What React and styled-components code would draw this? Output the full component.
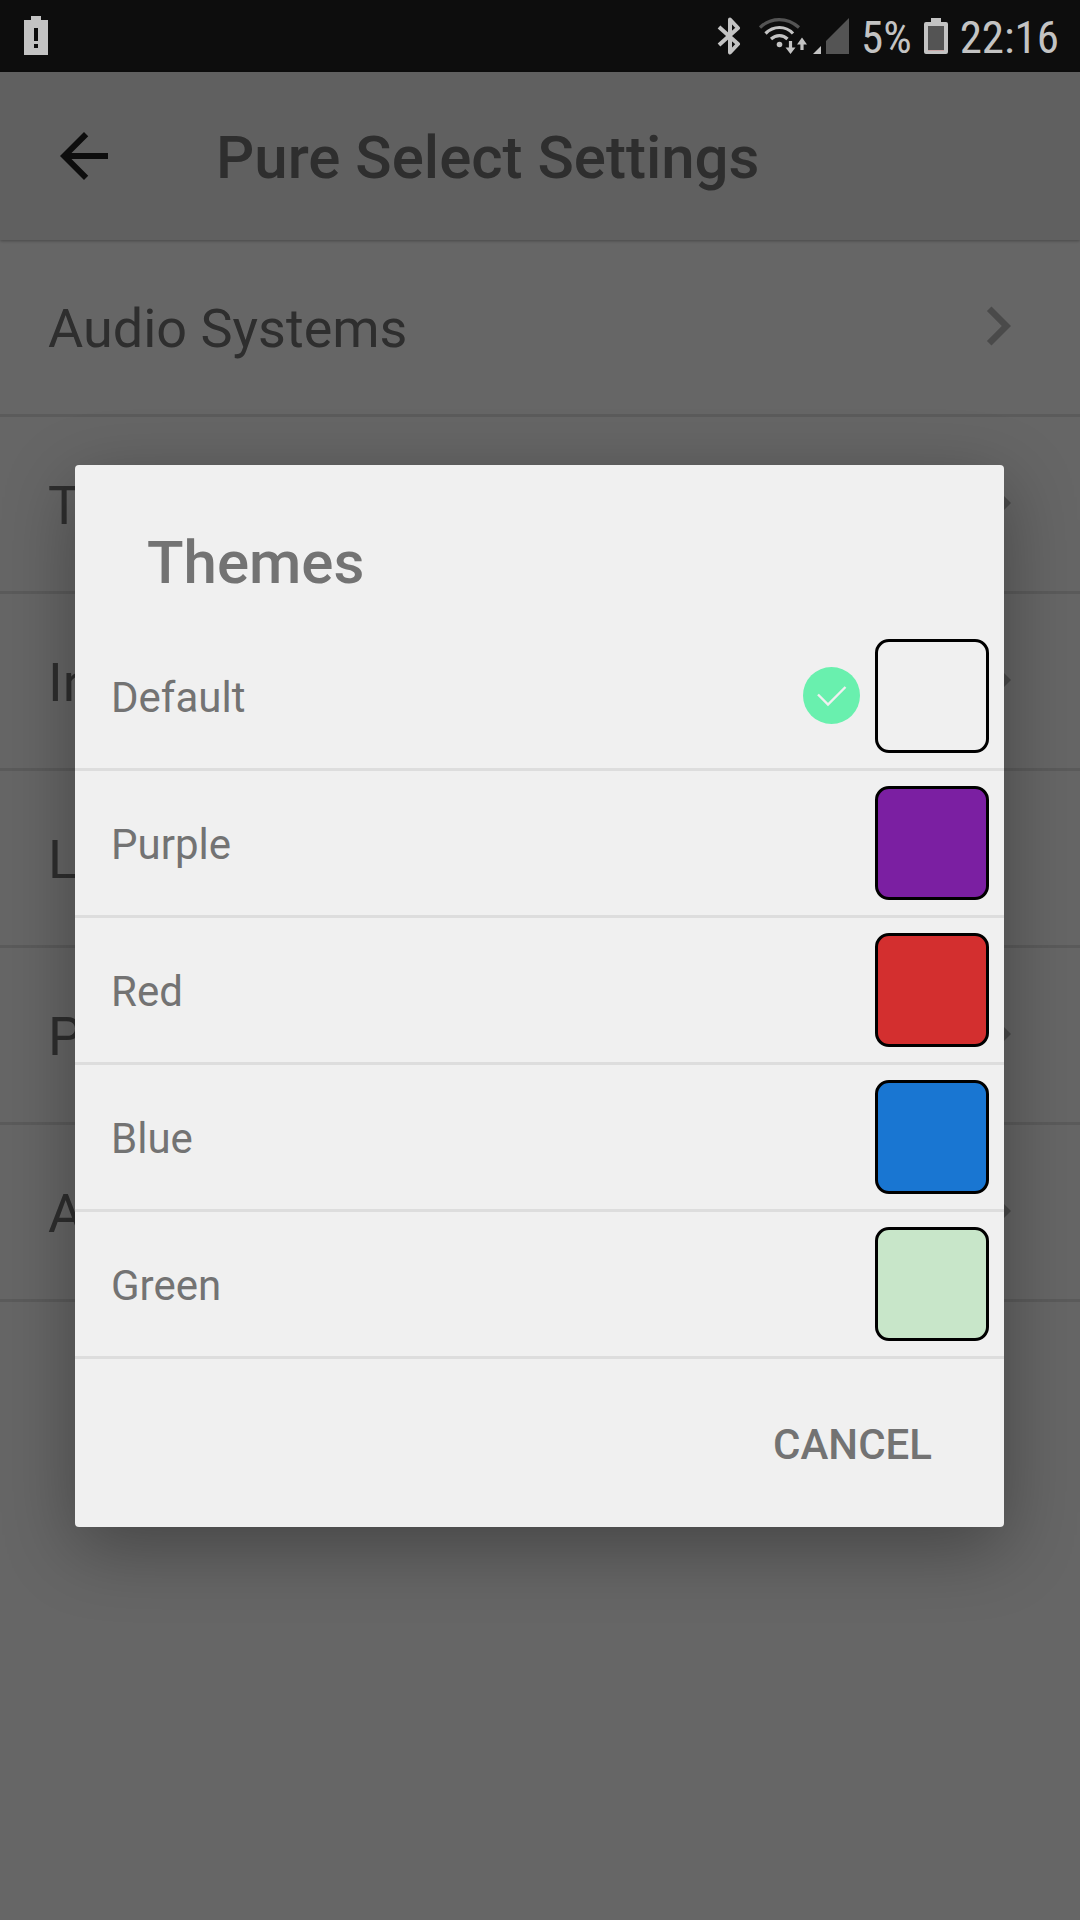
import React, { useState } from 'react';
import styled, { createGlobalStyle } from 'styled-components';

const GlobalStyle = createGlobalStyle`
  * {
    box-sizing: border-box;
  }
  body {
    margin: 0;
    background-color: #666666;
    font-family: Roboto, "Liberation Sans", sans-serif;
  }
`
const StyledScreen = styled.div`
  display: flex;
  flex-direction: column;
  min-height: 100vh;
`
const StyledStatusBar = styled.div`
  display: flex;
  align-items: center;
  justify-content: space-between;
  height: 72px;
  padding: 0 21px;
  background-color: #0d0d0d;
  color: #c3c3c3;
`
const StyledStatusGroup = styled.div`
  display: flex;
  align-items: center;
  gap: ${({ $gap }) => $gap}px;
`
const StyledStatusText = styled.span`
  padding-top: 4px;
  font-family: "Roboto Condensed", Roboto, sans-serif;
  font-size: 45px;
  line-height: 48px;
`
const StyledIcon = styled.svg`
  display: block;
  flex: none;
`
const StyledContent = styled.div`
  position: relative;
  display: flex;
  flex: 1;
  flex-direction: column;
  background-color: #ffffff;
`
const StyledHeader = styled.header`
  position: relative;
  display: flex;
  align-items: center;
  gap: 96px;
  height: 168px;
  padding: 0 48px;
  background-color: #f0f0f0;
  box-shadow: 0 1px 3px rgba(0, 0, 0, 0.3);
`
const StyledBackButton = styled.button`
  padding: 0;
  border: none;
  background: none;
  color: #212121;
`
const StyledTitle = styled.h1`
  margin: 0;
  padding-top: 4px;
  color: #737373;
  font-size: 60px;
  font-weight: 500;
  line-height: 72px;
`
const StyledSettingRow = styled.button`
  display: flex;
  align-items: center;
  justify-content: space-between;
  height: 177px;
  padding: 0 43px 0 48px;
  border: none;
  border-bottom: 3px solid #e3e3e3;
  background: none;
  color: #737373;
  font-family: inherit;
  font-size: 54px;
  line-height: 66px;
`
const StyledSettingName = styled.span`
  padding-top: 4px;
`
const StyledChevron = styled.span`
  padding-bottom: 3px;
`
const StyledScrim = styled.div`
  position: absolute;
  inset: 0;
  display: flex;
  align-items: center;
  padding: 0 76px 0 75px;
  background-color: rgba(0, 0, 0, 0.6);
`
const StyledDialog = styled.div`
  display: flex;
  flex: 1;
  flex-direction: column;
  border-radius: 4px;
  background-color: #f0f0f0;
  box-shadow: 0 20px 72px rgba(0, 0, 0, 0.33);
  color: #737373;
`
const StyledDialogTitle = styled.h2`
  margin: 0;
  padding: 62px 72px 25px;
  font-size: 60px;
  font-weight: 500;
  line-height: 72px;
`
const StyledOption = styled.label`
  display: flex;
  align-items: center;
  gap: 15px;
  height: 147px;
  padding: 0 15px 0 36px;
  border-bottom: 3px solid #dddddd;
  font-size: 42px;
  line-height: 48px;
`
const StyledOptionName = styled.span`
  flex: 1;
  padding-top: 4px;
`
const StyledRadio = styled.input`
  appearance: none;
  width: 0;
  height: 0;
  margin: 0;
`
const StyledSwatch = styled.span`
  width: 114px;
  height: 114px;
  border: 3px solid #000000;
  border-radius: 14px;
  background-color: ${({ $color }) => $color};
`
const StyledActions = styled.div`
  display: flex;
  justify-content: flex-end;
  padding: 62px 72px 58px;
`
const StyledCancelButton = styled.button`
  padding: 0;
  border: none;
  background: none;
  color: inherit;
  font-family: inherit;
  font-size: 42px;
  font-weight: 500;
  line-height: 48px;
`

const BatteryAlertIcon = () => (
    <StyledIcon width="28" height="40" viewBox="0 0 28 40">
        <path fill="#c3c3c3" fillRule="evenodd" d="M10 0h10v4h7v35H3V4h7zM13 12v13h4V12zM13 28v4h4v-4z" />
    </StyledIcon>
)

const BluetoothIcon = () => (
    <StyledIcon width="24" height="38" viewBox="0 0 24 38">
        <path
            d="M2 10l19 17-8 8.500V2.500L21 11 2 28"
            fill="none"
            stroke="#c3c3c3"
            strokeWidth="4"
            strokeLinejoin="round"
        />
    </StyledIcon>
)

const WifiIcon = () => (
    <StyledIcon width="48" height="37" viewBox="0 0 48 37">
        <g fill="none" strokeWidth="3.200">
            <path d="M1 9.500C12-1 28-1 40 9.500" stroke="#545454" />
            <path d="M6.500 15.500C14.500 7.500 26.500 7.500 34 15.500" stroke="#c3c3c3" />
            <path d="M12 21C17 16.500 24 16.500 28.500 21" stroke="#c3c3c3" />
            <path d="M31.500 23v9M43 32V23" stroke="#c3c3c3" />
        </g>
        <circle cx="20.500" cy="26.500" r="2.800" fill="#c3c3c3" />
        <path d="M26.500 29.500h10L31.500 36zM38 26.500h10L43 19.500z" fill="#c3c3c3" />
    </StyledIcon>
)

const SignalIcon = () => (
    <StyledIcon width="36" height="37" viewBox="0 0 36 37">
        <path d="M0 36l8-8v8z" fill="#c3c3c3" />
        <path d="M13 36V23L36 0v36z" fill="#545454" />
    </StyledIcon>
)

const BatteryIcon = () => (
    <StyledIcon width="24" height="36" viewBox="0 0 24 36">
        <path d="M7 0h10v4h5q2 0 2 2v28q0 2-2 2H2q-2 0-2-2V6q0-2 2-2h5z" fill="#c3c3c3" />
        <path d="M4 8h16v24H4z" fill="#545454" />
        <path d="M4 32h16v1H4z" fill="#c9a5a5" />
    </StyledIcon>
)

const BackIcon = () => (
    <StyledIcon width="72" height="72" viewBox="0 0 24 24">
        <path fill="currentColor" d="M20 11H7.830l5.590-5.590L12 4l-8 8 8 8 1.410-1.410L7.830 13H20v-2z" />
    </StyledIcon>
)

const ChevronIcon = () => (
    <StyledIcon width="78" height="78" viewBox="0 0 24 24">
        <path fill="#b9b9b9" d="M10 6L8.590 7.410 13.170 12l-4.580 4.590L10 18l6-6z" />
    </StyledIcon>
)

const CheckIcon = () => (
    <StyledIcon width="57" height="58" viewBox="0 0 57 58">
        <circle cx="28.500" cy="28.500" r="28.500" fill="#69f0ae" />
        <path d="M15 27.500L25 37.500 42.500 20" fill="none" stroke="#f0f0f0" strokeWidth="2.400" />
    </StyledIcon>
)

const settings = [
    { label: 'Audio Systems', hasPage: true },
    { label: 'Themes', hasPage: true },
    { label: 'Information', hasPage: true },
    { label: 'Language', hasPage: false },
    { label: 'Privacy Policy', hasPage: true },
    { label: 'About', hasPage: true },
]

const themes = [
    { name: 'Default', color: '#f0f0f0' },
    { name: 'Purple', color: '#7b1fa2' },
    { name: 'Red', color: '#d32f2f' },
    { name: 'Blue', color: '#1976d2' },
    { name: 'Green', color: '#c8e6c9' },
]

const StatusBar = () => (
    <StyledStatusBar>
        <BatteryAlertIcon />
        <StyledStatusGroup $gap={12}>
            <StyledStatusGroup $gap={18}>
                <BluetoothIcon />
                <StyledStatusGroup $gap={6}>
                    <WifiIcon />
                    <SignalIcon />
                </StyledStatusGroup>
            </StyledStatusGroup>
            <StyledStatusText>5%</StyledStatusText>
            <BatteryIcon />
            <StyledStatusText>22:16</StyledStatusText>
        </StyledStatusGroup>
    </StyledStatusBar>
)

const ThemeDialog = ({ selected, onSelect }) => (
    <StyledDialog role="dialog" aria-labelledby="themes-title">
        <StyledDialogTitle id="themes-title">Themes</StyledDialogTitle>
        {themes.map(({ name, color }) => (
            <StyledOption key={name}>
                <StyledOptionName>{name}</StyledOptionName>
                <StyledRadio
                    type="radio"
                    name="theme"
                    checked={selected === name}
                    onChange={() => onSelect(name)}
                />
                {selected === name && <CheckIcon />}
                <StyledSwatch $color={color} />
            </StyledOption>
        ))}
        <StyledActions>
            <StyledCancelButton type="button">CANCEL</StyledCancelButton>
        </StyledActions>
    </StyledDialog>
)

const App = () => {
    const [selected, setSelected] = useState('Default')

    return (
        <StyledScreen>
            <GlobalStyle />
            <StatusBar />
            <StyledContent>
                <StyledHeader>
                    <StyledBackButton type="button" aria-label="Back">
                        <BackIcon />
                    </StyledBackButton>
                    <StyledTitle>Pure Select Settings</StyledTitle>
                </StyledHeader>
                {settings.map(({ label, hasPage }) => (
                    <StyledSettingRow key={label} type="button">
                        <StyledSettingName>{label}</StyledSettingName>
                        {hasPage && (
                            <StyledChevron>
                                <ChevronIcon />
                            </StyledChevron>
                        )}
                    </StyledSettingRow>
                ))}
                <StyledScrim>
                    <ThemeDialog selected={selected} onSelect={setSelected} />
                </StyledScrim>
            </StyledContent>
        </StyledScreen>
    )
}

export default App
